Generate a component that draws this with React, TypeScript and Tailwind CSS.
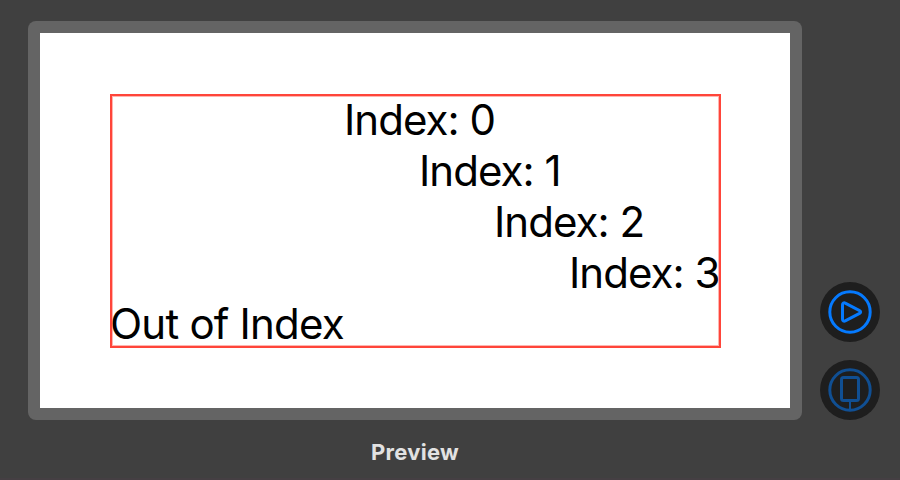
const rows = [
  { text: 'Index: 0', pad: 'pl-[234px]' },
  { text: 'Index: 1', pad: 'pl-[309px]' },
  { text: 'Index: 2', pad: 'pl-[384px]' },
  { text: 'Index: 3', pad: 'pl-[459px]' },
];

function PlayButton() {
  return (
    <button aria-label="Play" className="block size-[60px] rounded-full bg-[#1e1e1e]">
      <svg viewBox="0 0 60 60" className="size-[60px]" fill="none" stroke="#057aff" strokeWidth="3" strokeLinejoin="round">
        <circle cx="30" cy="30" r="20.2" />
        <path d="M22.5 22.7 V37.3 C22.5 38.8 23.9 39.6 25.2 38.9 L39.6 31.4 C41 30.7 41 29.3 39.6 28.6 L25.2 21.1 C23.9 20.4 22.5 21.2 22.5 22.7 Z" />
      </svg>
    </button>
  );
}

function DeviceButton() {
  return (
    <button aria-label="Preview on device" className="block size-[60px] rounded-full bg-[#1e1e1e]">
      <svg viewBox="0 0 60 60" className="size-[60px]" fill="none" stroke="#104f93">
        <circle cx="30" cy="30" r="20.2" strokeWidth="3" />
        <rect x="21.5" y="17.5" width="17" height="23" rx="2" strokeWidth="3" />
        <path d="M30 41 V50" strokeWidth="2" />
      </svg>
    </button>
  );
}

export default function App() {
  return (
    <div className="flex h-[480px] w-[900px] items-start border-b-2 border-[#453f43] bg-[#404040] pl-7 pt-[21px] font-['Inter',sans-serif]">
      <main className="w-[774px]">
        <section className="h-[399px] rounded-lg bg-[#646464] p-3">
          <div className="h-[375px] bg-white pl-[70px] pt-[61px]">
            <div className="relative h-[254px] w-[611px] text-[42px] leading-[51px] tracking-[-0.95px] text-black">
              {rows.map((r) => (
                <p key={r.text} className={`h-[51px] whitespace-nowrap ${r.pad}`}>{r.text}</p>
              ))}
              <p className="h-[50px] whitespace-nowrap tracking-[-0.78px]">Out of Index</p>
              <div className="absolute inset-0 border-2 border-[#ff453a] shadow-[inset_0_0_0_1px_rgba(255,69,58,0.4)]" />
            </div>
          </div>
        </section>
        <h1 className="mt-5 text-center text-[22px] font-bold leading-6 tracking-[0.25px] text-[#e2e2e2]">Preview</h1>
      </main>
      <aside className="ml-[18px] mt-[261px] flex flex-col gap-[18px]">
        <PlayButton />
        <DeviceButton />
      </aside>
    </div>
  );
}
